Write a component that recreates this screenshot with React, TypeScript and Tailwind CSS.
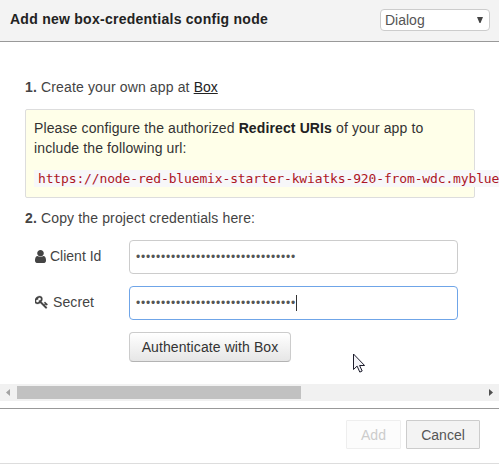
import React from "react";

const dots = "•".repeat(32);

function UserIcon() {
  return (
    <svg viewBox="256 0 1280 1792" preserveAspectRatio="none" className="h-[15px] w-[11px] shrink-0" fill="currentColor">
      <path d="M1536 1399q0 109-62.5 187t-150.5 78h-854q-88 0-150.5-78t-62.5-187q0-85 8.5-160.5t31.5-152 58.5-131 94-89 134.5-34.5q131 128 313 128t313-128q76 0 134.5 34.5t94 89 58.5 131 31.5 152 8.5 160.5zm-256-887q0 159-112.5 271.5t-271.5 112.5-271.5-112.5-112.5-271.5 112.5-271.5 271.5-112.5 271.5 112.5 112.5 271.5z" />
    </svg>
  );
}

function KeyIcon() {
  return (
    <svg viewBox="64 0 1664 1792" className="h-[14px] w-[13px] shrink-0" fill="currentColor" stroke="currentColor" strokeWidth="30">
      <path d="M832 512q0-80-56-136t-136-56-136 56-56 136q0 42 19 83-41-19-83-19-80 0-136 56t-56 136 56 136 136 56 136-56 56-136q0-42-19-83 41 19 83 19 80 0 136-56t56-136zm851 704q0 17-49 66t-66 49q-9 0-28.5-16t-36.5-33-38.5-40-24.5-26l-96 96 220 220q28 28 28 68 0 42-39 81t-81 39q-40 0-68-28l-671-671q-176 131-365 131-163 0-265.5-102.5t-102.5-265.5q0-160 95-313t248-248 313-95q163 0 265.5 102.5t102.5 265.5q0 189-131 365l355 355 96-96q-3-3-26-24.5t-40-38.5-33-36.5-16-28.5q0-17 49-66t66-49q13 0 23 10 6 6 46 44.5t82 79.5 86.5 86 73 78 28.5 41z" />
    </svg>
  );
}

export default function App() {
  return (
    <div className="relative flex h-[464px] w-[499px] flex-col overflow-hidden bg-white font-['Liberation_Sans',Arial,sans-serif] text-[14px] leading-5 text-[#444]">
      <header className="flex h-[42px] shrink-0 items-start justify-between border-b border-[#999] bg-[#f3f3f3] pl-[10px] pr-[9px] pt-[9px]">
        <h1 className="font-bold tracking-[0.26px] text-[#222]">Add new box-credentials config node</h1>
        <div className="flex h-[22px] w-[110px] items-center justify-between rounded-[4px] border border-[#ccc] bg-white pl-1 pr-[6px] text-[#555]">
          <span>Dialog</span>
          <svg viewBox="0 0 6 6" className="h-[6px] w-[6px]" fill="#444">
            <path d="M0 0h6L3.5 6h-1z" />
          </svg>
        </div>
      </header>

      <main className="flex h-[342px] shrink-0 flex-col pl-[25px] pt-[35px]">
        <p className="tracking-[0.14px]">
          <b>1.</b> Create your own app at <a className="tracking-normal text-[#222] underline">Box</a>
        </p>
        <div className="mt-3 h-[89px] w-[450px] shrink-0 rounded-[2px] border border-[#ddd] bg-[#ffffe9] px-2 pt-2 text-[#333]">
          <p className="whitespace-nowrap tracking-[0.12px]">
            Please configure the authorized <b className="text-[#222]">Redirect URIs</b> of your app to
            <br />
            include the following url:
          </p>
          <code className="mt-3 block h-[17px] w-[600px] whitespace-nowrap bg-[#f7f7f9] pl-1 font-['DejaVu_Sans_Mono',monospace] text-[13px] leading-[17px] tracking-[-0.14px] text-[#ad1625]">
            https://node-red-bluemix-starter-kwiatks-920-from-wdc.mybluemix.net
          </code>
        </div>
        <p className="mt-[10px] tracking-[0.14px]">
          <b>2.</b> Copy the project credentials here:
        </p>
        <div className="mt-3 flex">
          <div className="flex h-8 w-[104px] items-center gap-1 pl-[10px]">
            <UserIcon />
            <span>Client Id</span>
          </div>
          <div className="flex h-[34px] w-[329px] items-center rounded-[4px] border border-[#ccc] pl-[6px] text-[12px] tracking-[0.8px] text-[#555]">
            {dots}
          </div>
        </div>
        <div className="mt-3 flex">
          <div className="flex h-8 w-[104px] items-center gap-[5px] pl-[10px]">
            <KeyIcon />
            <span className="tracking-[0.1px]">Secret</span>
          </div>
          <div className="flex h-[34px] w-[329px] items-center rounded-[4px] border border-[#6fa5e8] pl-[6px] text-[12px] tracking-[0.8px] text-[#555]">
            {dots}
            <span className="h-4 w-px bg-[#333]" />
          </div>
        </div>
        <button className="ml-[104px] mt-3 h-[30px] w-[162px] shrink-0 rounded-[4px] border border-[#ccc] border-b-[#b3b3b3] bg-linear-to-b from-white to-[#e6e6e6] tracking-[0.1px] text-[#333]">
          Authenticate with Box
        </button>
      </main>

      <div className="flex h-[17px] shrink-0 items-center bg-[#f1f1f1]">
        <svg viewBox="0 0 17 17" className="h-[17px] w-[17px]" fill="#a3a3a3">
          <path d="M10 5v7L6 8.5z" />
        </svg>
        <div className="h-[13px] w-[284px] bg-[#c1c1c1]" />
        <svg viewBox="0 0 17 17" className="ml-auto h-[17px] w-[17px]" fill="#505050">
          <path d="M7 5v7l4-3.5z" />
        </svg>
      </div>

      <footer className="mt-[7px] flex h-[56px] shrink-0 items-start justify-end gap-[5px] border-b border-t border-b-[#ddd] border-t-[#999] pr-[19px] pt-[11px]">
        <button className="h-[29px] w-[55px] rounded-[1px] border border-[#eee] bg-[#fcfcfc] text-[#ccc]">Add</button>
        <button className="h-[29px] w-[74px] rounded-[1px] border border-[#ccc] bg-[#f3f3f3] text-[#555]">Cancel</button>
      </footer>

      <svg viewBox="0 0 12 20" className="absolute left-[353px] top-[353px] h-[20px] w-[12px]">
        <path d="M.5 1v15.5l3.6-3.4 2.7 6 2.4-1.1-2.6-5.5h5z" fill="#f4f4f8" stroke="#1c1c2b" />
      </svg>
    </div>
  );
}
